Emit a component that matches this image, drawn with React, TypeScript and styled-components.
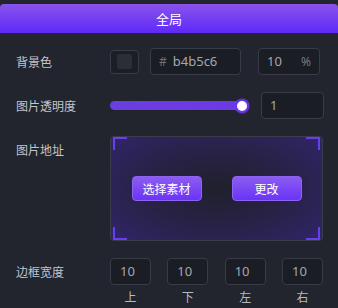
import React from "react";
import styled, { createGlobalStyle } from "styled-components";

const Global = createGlobalStyle`
  html, body { margin: 0; padding: 0; background: #22242e; }
  body { font-family: "Noto Sans CJK SC", "Noto Sans", sans-serif; }
  * { box-sizing: border-box; }
`;

const Panel = styled.div`
  width: 338px;
  height: 308px;
  background: #22242e;
  padding-top: 4px;
  overflow: hidden;
`;

const Header = styled.div`
  height: 29px;
  border-radius: 4px 4px 0 0;
  background: linear-gradient(180deg, #8953ea 0%, #5f29f9 100%);
  color: #ffffff;
  font-size: 13px;
  display: flex;
  align-items: center;
  justify-content: center;
  line-height: 1;
`;

const Body = styled.div`
  display: grid;
  grid-template-columns: 94px 1fr;
  padding: 15px 15px 0 16px;
  row-gap: 17px;
`;

const Label = styled.div<{ $top?: boolean }>`
  color: #c3c5cd;
  font-size: 12px;
  line-height: 1;
  display: flex;
  align-items: ${(p) => (p.$top ? "flex-start" : "center")};
  padding-top: ${(p) => (p.$top ? "8px" : "0")};
`;

const Line = styled.div`
  display: flex;
  align-items: center;
`;

const Swatch = styled.div`
  width: 29px;
  height: 24px;
  border: 1px solid #393b46;
  border-radius: 4px;
  background: #1c1e26;
  display: flex;
  align-items: center;
  justify-content: center;
  margin-right: 11px;
`;

const SwatchFill = styled.div`
  width: 15px;
  height: 15px;
  border-radius: 2px;
  background: #2c2e37;
`;

const Field = styled.div<{ $w: number }>`
  width: ${(p) => p.$w}px;
  height: 27px;
  border: 1px solid #393b46;
  border-radius: 4px;
  background: #1b1d25;
  display: flex;
  align-items: center;
  padding: 0 8px;
  font-family: "Noto Sans", sans-serif;
  font-size: 13px;
  color: #a4a7b1;
  line-height: 1;
`;

const Hash = styled.span`
  color: #6d707b;
  font-size: 12px;
  margin-right: 6px;
`;

const Unit = styled.span`
  margin-left: auto;
  color: #777a85;
  font-size: 12px;
`;

const Spacer = styled.div<{ $w: number }>`
  width: ${(p) => p.$w}px;
  flex: none;
`;

const Slider = styled.div`
  position: relative;
  width: 139px;
  height: 9px;
  border-radius: 5px;
  background: linear-gradient(90deg, #6a3ee0 0%, #6d38e8 100%);
  margin-right: 12px;
`;

const Thumb = styled.div`
  position: absolute;
  left: 125px;
  top: 50%;
  width: 14px;
  height: 14px;
  margin-top: -7px;
  border-radius: 50%;
  background: #ffffff;
  border: 2px solid #6a34f0;
  box-shadow: 0 0 2px #7a4cff;
`;

const ImageBox = styled.div`
  position: relative;
  height: 105px;
  width: 213px;
  border: 1px solid #3a3c47;
  border-radius: 4px;
  background: radial-gradient(ellipse 70% 75% at 50% 50%, #20202c 0%, #29224a 55%, #30266a 100%);
  display: flex;
  align-items: center;
  justify-content: center;
  gap: 30px;
`;

const Corner = styled.div<{ $v: "top" | "bottom"; $h: "left" | "right" }>`
  position: absolute;
  width: 14px;
  height: 13px;
  ${(p) => p.$v}: 0;
  ${(p) => p.$h}: 2px;
  border-${(p) => p.$v}: 2px solid #6a3cf4;
  border-${(p) => p.$h}: 2px solid #6a3cf4;
`;

const Button = styled.div`
  width: 70px;
  height: 25px;
  border-radius: 4px;
  border: 1px solid #8d63f3;
  background: linear-gradient(180deg, #8c5cf0 0%, #6a34f6 100%);
  color: #ffffff;
  font-size: 12px;
  display: flex;
  align-items: center;
  justify-content: center;
  line-height: 1;
`;

const Sides = styled.div`
  display: flex;
  justify-content: space-between;
  width: 213px;
`;

const Side = styled.div`
  display: flex;
  flex-direction: column;
  align-items: center;
  gap: 6px;
`;

const SideLabel = styled.div`
  color: #b8bac2;
  font-size: 12px;
  line-height: 12px;
`;

const SideField = styled(Field)`
  padding: 0 9px;
`;

export default function App() {
  return (
    <>
      <Global />
      <Panel>
        <Header>全局</Header>
        <Body>
          <Label>背景色</Label>
          <Line>
            <Swatch>
              <SwatchFill />
            </Swatch>
            <Field $w={91}>
              <Hash>#</Hash>b4b5c6
            </Field>
            <Spacer $w={17} />
            <Field $w={62}>
              10<Unit>%</Unit>
            </Field>
          </Line>

          <Label>图片透明度</Label>
          <Line>
            <Slider>
              <Thumb />
            </Slider>
            <Field $w={63}>1</Field>
          </Line>

          <Label $top>图片地址</Label>
          <ImageBox>
            <Corner $v="top" $h="left" />
            <Corner $v="top" $h="right" />
            <Corner $v="bottom" $h="left" />
            <Corner $v="bottom" $h="right" />
            <Button>选择素材</Button>
            <Button>更改</Button>
          </ImageBox>

          <Label $top>边框宽度</Label>
          <Sides>
            {["上", "下", "左", "右"].map((s) => (
              <Side key={s}>
                <SideField $w={41}>10</SideField>
                <SideLabel>{s}</SideLabel>
              </Side>
            ))}
          </Sides>
        </Body>
      </Panel>
    </>
  );
}
